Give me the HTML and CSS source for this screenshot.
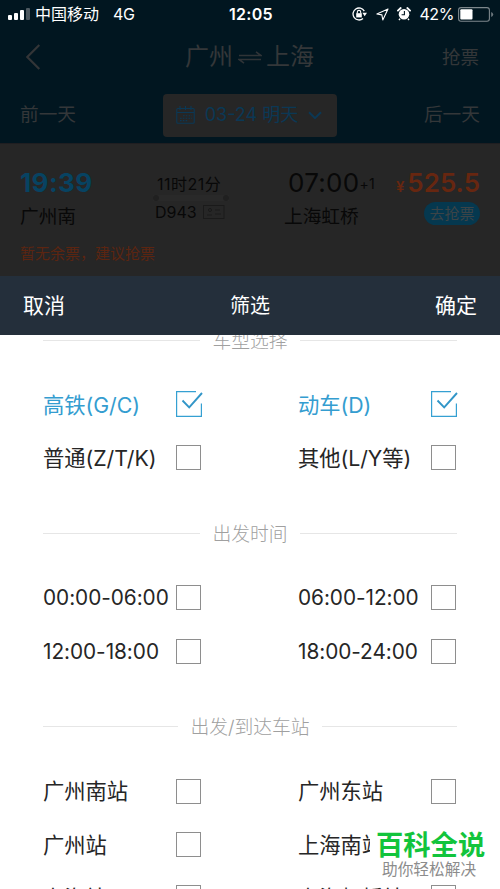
FILE: index.html
```
<!DOCTYPE html>
<html lang="zh-CN">
<head>
<meta charset="utf-8">
<title>筛选</title>
<link rel="stylesheet" href="styles.css">
</head>
<body>
<div class="screen">
  <header class="top">
    <div class="status">
      <div class="status-left">
        <svg class="signal" width="23" height="12" viewBox="0 0 23 12"><rect x="0" y="7" width="4" height="5" rx="1" fill="#fff"/><rect x="6" y="5" width="4" height="7" rx="1" fill="#fff"/><rect x="12" y="2" width="4" height="10" rx="1" fill="#fff"/><rect x="18" y="0" width="4" height="12" rx="1" fill="#4d5960"/></svg>
        <span class="carrier">中国移动</span><span class="network">4G</span>
      </div>
      <div class="clock">12:05</div>
      <div class="status-right">
        <svg width="15" height="14" viewBox="0 0 15 14" fill="none" stroke="#fff" stroke-width="1.3"><path d="M12.3 4.1A6 6 0 1 0 11 11.5"/><path d="M10.4 5.8h4.6l-2.3 3.4z" fill="#fff" stroke="none"/><rect x="4.2" y="6.2" width="5.6" height="4.2" fill="#fff" stroke="none"/><path d="M5.3 6.4V5.1a1.7 1.7 0 0 1 3.4 0v1.3" stroke-width="1.1"/></svg>
        <svg class="locate" width="13" height="13" viewBox="0 0 13 13" fill="none" stroke="#fff" stroke-width="1.1" stroke-linejoin="round"><path d="M12 1 .9 6l5 .9.9 5.1z"/></svg>
        <svg class="alarm" width="14" height="14" viewBox="0 0 14 14"><circle cx="7" cy="7.3" r="5.3" fill="#fff"/><path d="M.9 3.6 3.7 1M13.1 3.6 10.3 1" stroke="#fff" stroke-width="1.8" stroke-linecap="round"/><path d="M3 11.8 2 13M11 11.8l1 1.2" stroke="#fff" stroke-width="1.4"/><path d="M7.4 4v3.8H4.6" fill="none" stroke="#011620" stroke-width="1.1"/></svg>
        <span class="percent">42%</span>
        <svg width="36" height="15" viewBox="0 0 36 15"><rect x=".6" y=".6" width="30.8" height="13.6" rx="2.4" fill="none" stroke="#7d878c" stroke-width="1.1"/><rect x="2.3" y="2.3" width="12.2" height="10.2" rx="1" fill="#fff"/><path d="M33.2 5v5q2-.8 2-2.5T33.2 5z" fill="#6c777d"/></svg>
      </div>
    </div>
    <div class="nav">
      <svg width="16" height="26" viewBox="0 0 16 26" fill="none" stroke="#333537" stroke-width="2.2"><path d="M14.3 1 2.3 13l12 12"/></svg>
      <div class="route"><span>广州</span><svg width="24" height="13" viewBox="0 0 24 13" fill="none" stroke="#303437" stroke-width="1.6"><path d="M1 4.5h22L18 .8M23 8.5H1l5 3.7"/></svg><span>上海</span></div>
      <span class="grab">抢票</span>
    </div>
    <div class="days">
      <span>前一天</span>
      <div class="date">
        <svg width="19" height="18" viewBox="0 0 19 18" fill="none" stroke="#0b3855" stroke-width="1.1"><rect x=".8" y="2.5" width="17.4" height="14.7" rx="1"/><path d="M.8 6.5h17.4M4 0v4M9.5 0v4M15 0v4"/><path d="M7 9.8h9M4 12.2h12M4 14.6h8" stroke-dasharray="1.6 1.2"/></svg>
        <span>03-24 明天</span>
        <svg width="14" height="9" viewBox="0 0 14 9" fill="none" stroke="#0b3855" stroke-width="2"><path d="m1 1.2 6 6 6-6"/></svg>
      </div>
      <span>后一天</span>
    </div>
  </header>
  <section class="train">
    <div class="depart"><div class="time start">19:39</div><div class="station">广州南</div></div>
    <div class="duration">
      <div class="hours">11时21分</div>
      <div class="track"><i></i><i></i></div>
      <div class="number">D943 <svg width="22" height="14" viewBox="0 0 22 14" fill="none" stroke="#1a1a1a"><rect x=".5" y=".5" width="20.5" height="13"/><circle cx="7" cy="5" r="1.5"/><path d="M4 10h5M12 5h5M12 9h6"/></svg></div>
    </div>
    <div class="arrive"><div class="time">07:00<small>+1</small></div><div class="station">上海虹桥</div></div>
    <div class="fare"><div class="price"><small>¥</small>525.5</div><span class="pill">去抢票</span></div>
    <div class="notice">暂无余票，建议抢票</div>
  </section>
  <div class="toolbar"><span>取消</span><span class="title">筛选</span><span>确定</span></div>
  <main class="filters">
    <section class="group">
      <h2>车型选择</h2>
      <div class="options">
        <label class="option on"><span>高铁(G/C)</span><svg class="check" width="28" height="27" viewBox="0 0 28 27"><path d="M20 1.7H.6v24.6h24.8V13.5" fill="none" stroke="#35a0d2" stroke-width="1.2"/><path d="m6.5 10.5 6.7 6.8L26 3" fill="none" stroke="#3296c8" stroke-width="1.9"/></svg></label>
        <label class="option on"><span>动车(D)</span><svg class="check" width="28" height="27" viewBox="0 0 28 27"><path d="M20 1.7H.6v24.6h24.8V13.5" fill="none" stroke="#35a0d2" stroke-width="1.2"/><path d="m6.5 10.5 6.7 6.8L26 3" fill="none" stroke="#3296c8" stroke-width="1.9"/></svg></label>
        <label class="option"><span>普通(Z/T/K)</span><i class="box"></i></label>
        <label class="option"><span>其他(L/Y等)</span><i class="box"></i></label>
      </div>
    </section>
    <section class="group">
      <h2>出发时间</h2>
      <div class="options">
        <label class="option hours-option"><span>00:00-06:00</span><i class="box"></i></label>
        <label class="option hours-option"><span>06:00-12:00</span><i class="box"></i></label>
        <label class="option hours-option"><span>12:00-18:00</span><i class="box"></i></label>
        <label class="option hours-option"><span>18:00-24:00</span><i class="box"></i></label>
      </div>
    </section>
    <section class="group">
      <h2>出发/到达车站</h2>
      <div class="options">
        <label class="option"><span>广州南站</span><i class="box"></i></label>
        <label class="option"><span>广州东站</span><i class="box"></i></label>
        <label class="option"><span>广州站</span><i class="box"></i></label>
        <label class="option"><span>上海南站</span><i class="box"></i></label>
        <label class="option"><span>上海站</span><i class="box"></i></label>
        <label class="option"><span>上海虹桥站</span><i class="box"></i></label>
      </div>
    </section>
  </main>
  <div class="brand"><b>百科全说</b><span>助你轻松解决</span></div>
</div>
</body>
</html>
```
FILE: styles.css
```
* { box-sizing: border-box; }
body { margin: 0; font-family: Inter, "Noto Sans CJK SC", sans-serif; }
svg { display: block; flex: none; }
.screen { position: relative; width: 500px; height: 889px; overflow: hidden; background: #fff; line-height: 1; white-space: nowrap; }

.top { height: 143px; background: #011620; color: #343739; }
.status { height: 28px; display: grid; grid-template-columns: 1fr auto 1fr; align-items: center; padding: 0 8px; color: #fff; }
.status-left { display: flex; align-items: center; font-size: 16px; }
.carrier { margin-left: 4px; }
.network { margin-left: 14px; letter-spacing: -.3px; }
.clock { font-size: 16px; font-weight: 600; letter-spacing: .3px; padding-left: 2px; }
.status-right { display: flex; align-items: center; justify-content: flex-end; margin-right: -2px; }
.locate { margin-left: 9px; }
.alarm { margin-left: 8px; }
.percent { margin: 0 4px 0 8px; font-size: 16px; letter-spacing: -.4px; }
.nav { height: 58px; display: grid; grid-template-columns: 1fr auto 1fr; align-items: center; padding: 0 21px 0 25px; }
.route { display: flex; align-items: center; gap: 4.5px; margin-left: -5px; font-size: 24px; }
.grab { justify-self: end; font-size: 18.5px; }
.days { height: 57px; display: flex; align-items: center; justify-content: space-between; padding: 1px 20px 0; font-size: 18.7px; }
.date { width: 174px; height: 43px; display: flex; align-items: center; justify-content: space-between; padding: 0 15px 0 13px; border-radius: 4px; background: #262626; color: #0b3855; font-size: 18px; }

.train { height: 133px; background: #262626; color: #080808; display: grid; grid-template-columns: 133px 131px 106px 90px; grid-template-rows: 92px 1fr; padding: 9px 20px 0; border-top: 1px solid #1f1e21; }
.time { font-size: 26px; line-height: 60px; height: 47px; }
.start { color: #074362; font-weight: 700; letter-spacing: .4px; }
.time small { font-size: 14px; vertical-align: 3px; }
.station { font-size: 18.7px; line-height: 34px; }
.duration { padding: 23px 0 0 2px; font-size: 16px; }
.hours { padding-left: 2px; letter-spacing: .5px; }
.track { width: 76px; height: 6px; display: flex; justify-content: space-between; align-items: center; margin: 3px 0 3px -2px; background: #292929; }
.track i { width: 6px; height: 6px; border-radius: 50%; background: #202020; }
.number { display: flex; align-items: center; gap: 6px; }
.arrive .time { padding-left: 4px; letter-spacing: .3px; }
.fare { display: flex; flex-direction: column; align-items: flex-end; }
.price { color: #672610; font-size: 26px; line-height: 60px; height: 49px; font-weight: 600; }
.price small { font-size: 15px; margin-right: 3px; }
.pill { width: 56px; height: 23px; border-radius: 12px; background: #05384f; color: #3c4447; font-size: 15px; line-height: 23px; text-align: center; }
.notice { grid-column: 1 / -1; color: #5c2511; font-size: 15px; line-height: 17px; }

.toolbar { position: relative; z-index: 1; height: 59px; display: flex; align-items: center; justify-content: space-between; padding: 0 23px; background: #242f3b; color: #fff; font-size: 21px; }
.toolbar .title { font-size: 20px; }

.filters { margin-top: -10px; padding: 0 43px; }
.group { height: 193.3px; padding-top: 4px; }
h2 { display: flex; align-items: center; gap: 12px; height: 26px; margin: 0 0 37px; color: #a0a0a0; font-size: 18.8px; font-weight: 300; }
h2::before, h2::after { content: ""; flex: 1; height: 1px; margin-top: -4px; background: #e6e6e6; }
.options { display: grid; grid-template-columns: 158px 158px; column-gap: 97px; row-gap: 28.3px; }
.option { height: 25px; display: flex; align-items: center; justify-content: space-between; color: #262626; font-size: 21.3px; }
.option span { letter-spacing: -.05px; padding-top: 2px; }
.hours-option { font-size: 20.8px; }
.on { color: #349dd0; }
.box { width: 25px; height: 25px; border: 1px solid #8e8e8e; flex: none; }
.check { margin: -2px -3px 0 0; }

.brand { position: absolute; left: 370px; top: 828px; width: 130px; height: 51px; background: #fff; padding: 3px 0 0 6px; }
.brand b { display: block; color: #12c43c; font-size: 27.3px; line-height: 30px; }
.brand span { display: block; margin-left: 6px; color: #8c8c8c; font-size: 15.7px; line-height: 17px; }
```
